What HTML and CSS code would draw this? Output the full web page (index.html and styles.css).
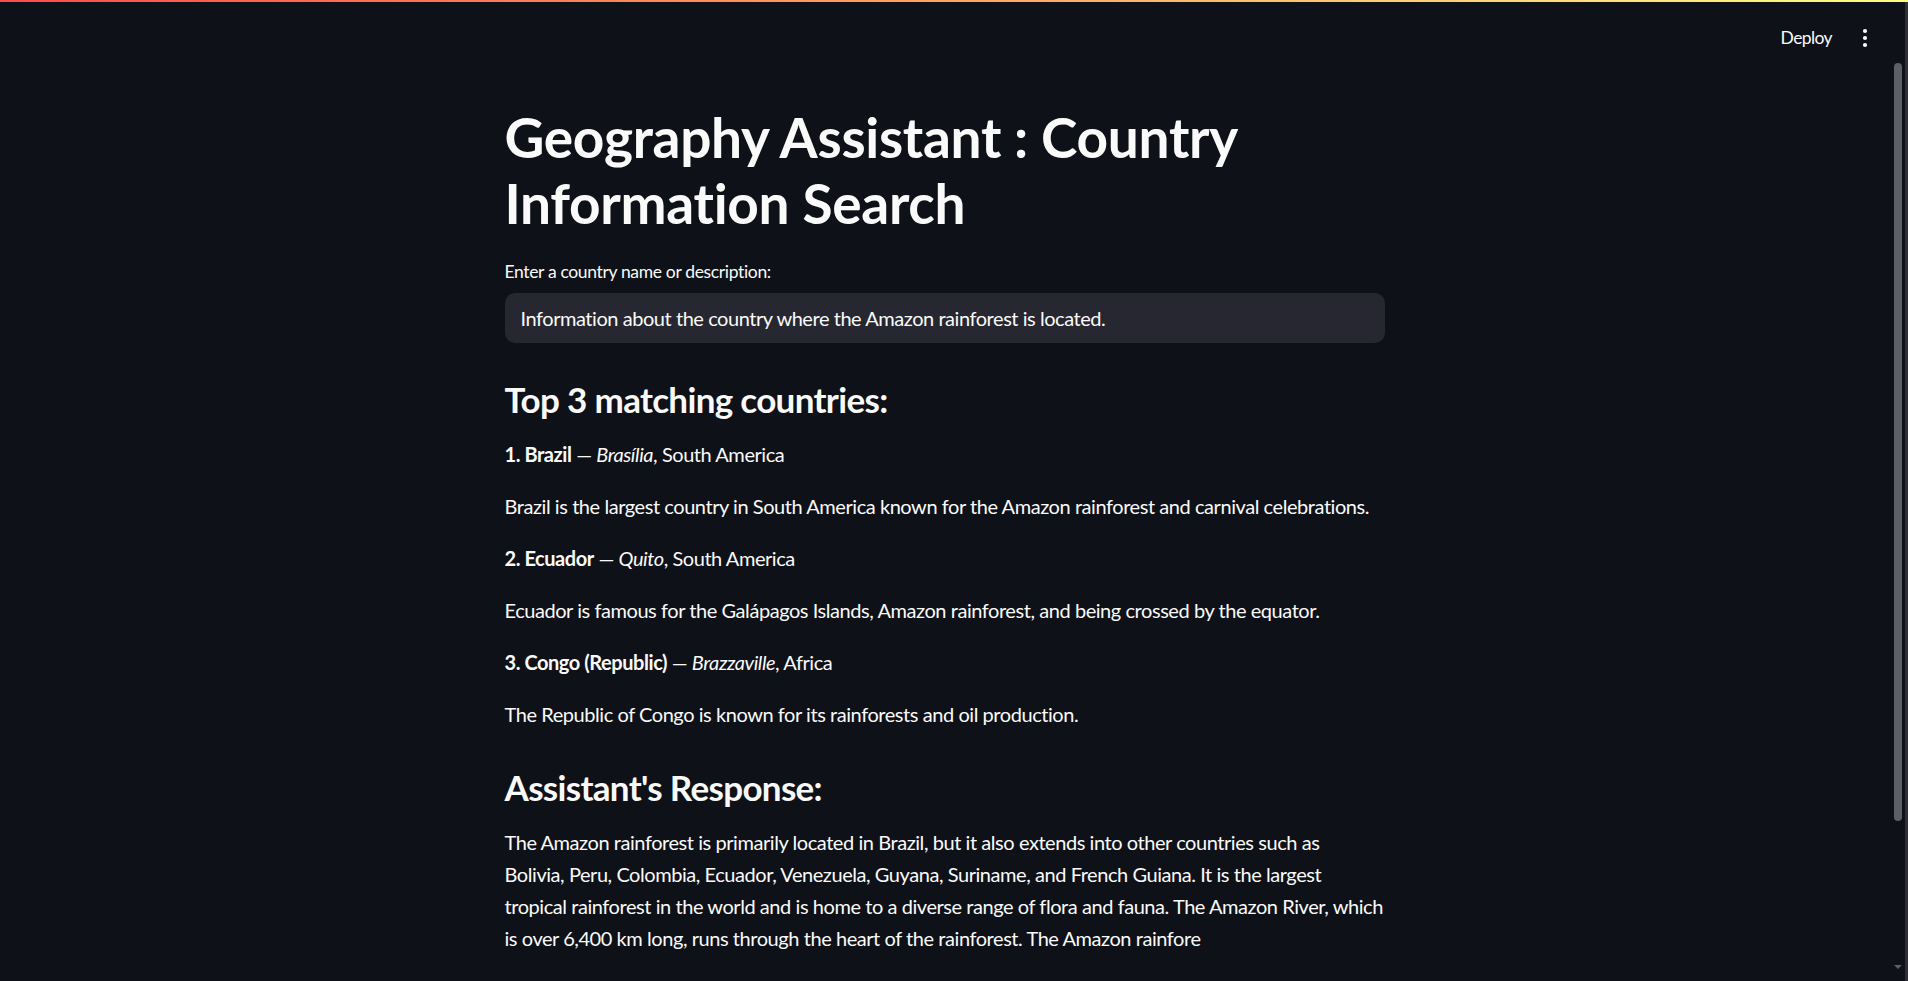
FILE: index.html
```html
<!DOCTYPE html>
<html lang="en">
<head>
<meta charset="utf-8">
<title>Geography Assistant</title>
<link rel="stylesheet" href="styles.css">
</head>
<body>
<div class="decoration"></div>
<div class="shell">
  <div class="app">
    <header class="toolbar">
      <button class="deploy">Deploy</button>
      <button class="menu" aria-label="Main menu">
        <svg width="8" height="20" viewBox="0 0 8 20"><circle cx="4" cy="3" r="2.1" fill="#fafafa"/><circle cx="4" cy="10" r="2.1" fill="#fafafa"/><circle cx="4" cy="17" r="2.1" fill="#fafafa"/></svg>
      </button>
    </header>
    <main class="scroller">
      <div class="block">
        <h1 class="title">Geography Assistant : Country Information Search</h1>
        <div class="field">
          <label class="label" for="q">Enter a country name or description:</label>
          <input class="input" id="q" type="text" value="Information about the country where the Amazon rainforest is located.">
        </div>
        <h3 class="section">Top 3 matching countries:</h3>
        <p class="text"><strong>1. Brazil</strong> — <em>Brasília</em>, South America</p>
        <p class="text">Brazil is the largest country in South America known for the Amazon rainforest and carnival celebrations.</p>
        <p class="text"><strong>2. Ecuador</strong> — <em>Quito</em>, South America</p>
        <p class="text">Ecuador is famous for the Galápagos Islands, Amazon rainforest, and being crossed by the equator.</p>
        <p class="text"><strong>3. Congo (Republic)</strong> — <em>Brazzaville</em>, Africa</p>
        <p class="text">The Republic of Congo is known for its rainforests and oil production.</p>
        <h3 class="section">Assistant's Response:</h3>
        <p class="text response">The Amazon rainforest is primarily located in Brazil, but it also extends into other countries such as<br>Bolivia, Peru, Colombia, Ecuador, Venezuela, Guyana, Suriname, and French Guiana. It is the largest<br>tropical rainforest in the world and is home to a diverse range of flora and fauna. The Amazon River, which<br>is over 6,400 km long, runs through the heart of the rainforest. The Amazon rainfore</p>
      </div>
    </main>
  </div>
  <div class="scrollbar" aria-hidden="true">
    <div class="thumb"></div>
    <div class="arrow"></div>
  </div>
  <div class="edge"></div>
</div>
</body>
</html>
```
FILE: styles.css
```css
* { box-sizing: border-box; }
html, body { margin: 0; height: 100%; }
body {
  background: #0e1117;
  color: #fafafa;
  font-family: Lato, "Liberation Sans", sans-serif;
  overflow: hidden;
}
.decoration {
  height: 2px;
  background: linear-gradient(90deg, #ff4b4b, #fffd80);
}
.shell {
  display: flex;
  height: calc(100vh - 2px);
}
.app {
  flex: 1;
  min-width: 0;
  display: flex;
  flex-direction: column;
}
.scrollbar {
  width: 16px;
  flex: none;
  display: flex;
  flex-direction: column;
  justify-content: space-between;
  align-items: center;
  padding: 61px 3px 12px 5px;
}
.thumb {
  width: 8px;
  height: 758px;
  border-radius: 4px;
  background: #5e5f64;
}
.arrow {
  width: 0;
  height: 0;
  border-left: 4px solid transparent;
  border-right: 4px solid transparent;
  border-top: 4px solid #5e5f64;
}
.edge {
  width: 3px;
  background: #2e3035;
}
.toolbar {
  height: 58px;
  flex: none;
  display: flex;
  justify-content: flex-end;
  align-items: center;
  padding: 14px 20px 0 0;
  gap: 29px;
}
.deploy {
  background: none;
  border: none;
  color: #fafafa;
  font: 400 17.5px/28px Lato, "Liberation Sans", sans-serif;
  letter-spacing: -0.6px;
  padding: 0;
  cursor: pointer;
}
.menu {
  background: none;
  border: none;
  padding: 0;
  width: 8px;
  height: 20px;
  display: flex;
}
.scroller {
  flex: 1;
  overflow: hidden;
}
.block {
  width: 880px;
  margin: 0 auto;
  padding: 44px 0 220px;
}
.title {
  margin: 0;
  font-size: 55px;
  line-height: 66px;
  font-weight: 700;
  letter-spacing: -0.3px;
}
.field {
  margin: 22px 0 19px;
  display: flex;
  flex-direction: column;
  gap: 7px;
}
.label {
  font-size: 17.5px;
  line-height: 28px;
  letter-spacing: -0.34px;
}
.input {
  height: 50px;
  border: none;
  border-radius: 10px;
  background: #262730;
  color: #fafafa;
  padding: 0 16px;
  font: 400 20px Lato, "Liberation Sans", sans-serif;
  letter-spacing: -0.45px;
  outline: none;
}
.section {
  margin: 0 0 18px;
  padding-top: 16px;
  font-size: 35px;
  line-height: 42px;
  font-weight: 700;
  letter-spacing: -0.68px;
}
.text {
  margin: 0 0 20px;
  font-size: 20px;
  line-height: 32px;
  letter-spacing: -0.44px;
}
.text strong { font-weight: 700; }
.response { white-space: nowrap; }
```
